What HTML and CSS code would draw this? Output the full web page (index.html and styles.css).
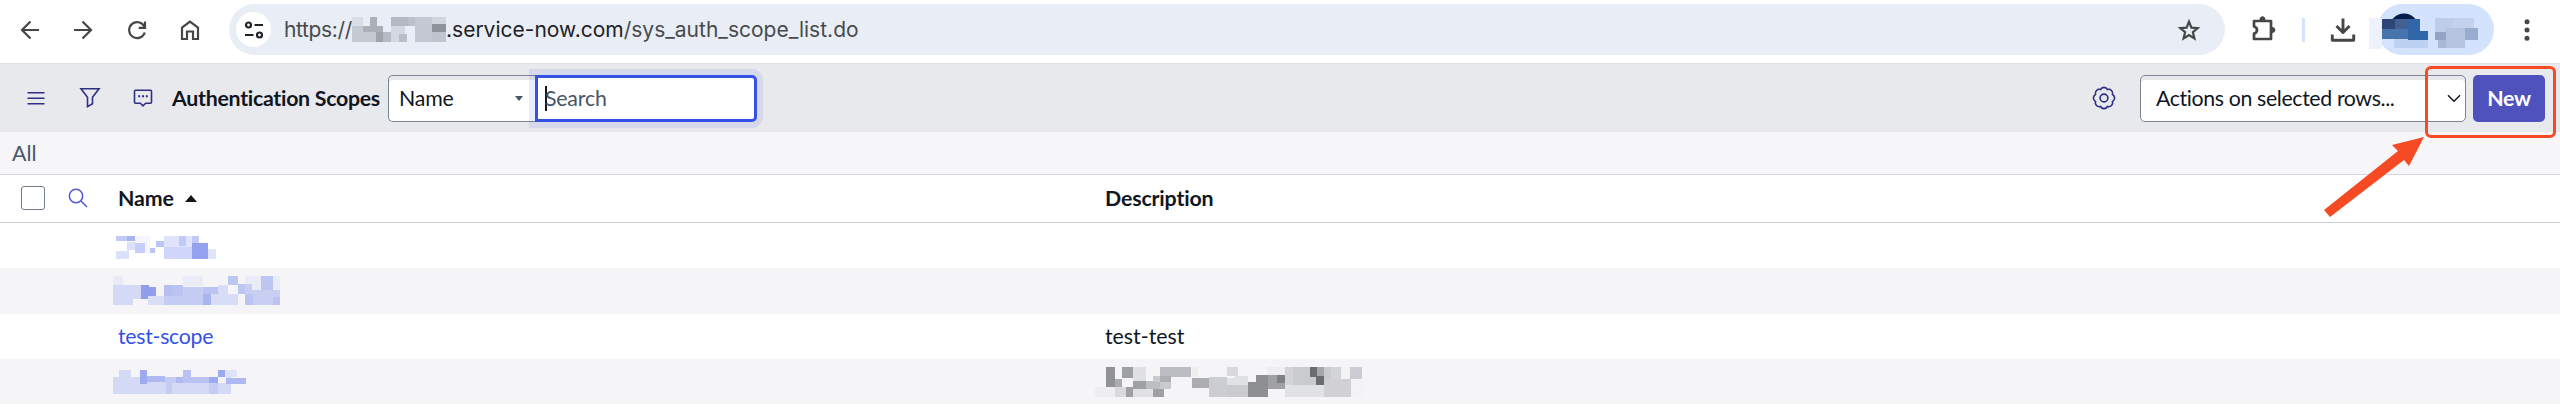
FILE: index.html
```html
<!doctype html>
<html lang="en">
    <head>
        <meta charset="utf-8">
        <title>Authentication Scopes</title>
        <meta name="viewport" content="width=device-width, initial-scale=1">
        <link rel="stylesheet" href="styles.css">
    </head>
    <body>
        <div class="browser-bar">
            <nav class="nav-icons">
                <svg class="icon" viewBox="0 0 28 28"><path d="M23 14H6M14.500 5.500L6 14l8.500 8.500"/></svg>
                <svg class="icon" viewBox="0 0 28 28"><path d="M5 14h17M13.500 5.500L22 14l-8.500 8.500"/></svg>
                <svg class="icon" viewBox="0 0 28 28"><path d="M21.300 10.500A8 8 0 1 0 21.800 16.500M22 5.500v6.300h-6.300"/></svg>
                <svg class="icon" viewBox="0 0 28 28"><path d="M6 23V11.500L14 5.500l8 6V23h-5v-7.500h-6V23z"/></svg>
            </nav>
            <div class="address">
                <span class="site-info">
                    <svg width="20" height="20" viewBox="0 0 20 20"><circle cx="4.500" cy="5" r="2.500"/><path d="M10.500 5H19M1 15h8.500"/><circle cx="15.500" cy="15" r="2.500"/></svg>
                </span>
                <span class="url-scheme">https://</span>
                <svg class="mask" width="94" height="25" viewBox="0 0 94 25" shape-rendering="crispEdges">
                    <path fill="#d9dde6" d="M0 0h11v9H0z"/><path fill="#c5c9d2" d="M0 9h24v16H0z"/><path fill="#abb0b8" d="M18 0h7v9h6v6H11V9h7z"/><path fill="#b5bac3" d="M24 15h15v10H24z"/><path fill="#a0a4ab" d="M24 15h7v10h-7z"/><path fill="#b4b8c2" d="M39 0h17v9H39z"/><path fill="#bcc0ca" d="M56 0h7v9h-7z"/><path fill="#d2d7e1" d="M39 9h14v16H39z"/><path fill="#b9bec9" d="M47 17h8v8h-8z"/><path fill="#c3c8d2" d="M63 0h18v25H63z"/><path fill="#d1d5de" d="M80 0h14v8H80z"/><path fill="#8e9299" d="M80 7h14v8H80z"/><path fill="#bfc4ce" d="M80 15h14v10H80z"/>
                </svg>
                <span class="url-host">.service-now.com</span><span class="url-path">/sys_auth_scope_list.do</span>
                <svg class="icon star" viewBox="0 0 28 28"><path d="M14 5.600l2.400 6 6.300.5-4.800 4.100 1.500 6.300-5.400-3.400-5.400 3.400 1.500-6.300-4.800-4.100 6.300-.5z"/></svg>
            </div>
            <div class="browser-tools">
                <svg class="icon puzzle" viewBox="0 0 28 28"><path d="M4 7h17v18H4v-5.500c4-1 4-6 0-7z" stroke-width="2.700" stroke-linejoin="round"/><path class="solid" d="M9.500 6c0-5 6-5 6 0zM22 13c4.500 0 4.500 6 0 6z"/></svg>
                <span class="separator"></span>
                <svg class="icon download" viewBox="0 0 28 28"><path d="M14 2.500v14M7.500 10L14 16.500 20.500 10M3.300 18.500v5.700h21.400v-5.700" stroke-width="2.900" stroke-linejoin="round"/></svg>
                <div class="profile">
                    <svg class="mask" width="117" height="31" viewBox="0 0 117 31" shape-rendering="crispEdges">
                        <path fill="#edf2fe" d="M0 0h13v31H0z"/><path fill="#bdd1f2" d="M25 21h34v9H25z"/><path fill="#2d4675" d="M13 1h13v10H13z"/><path fill="#445f93" d="M26 1h13v10H26z"/><path fill="#4675ad" d="M13 11h26v10H13z"/><path fill="#3065a8" d="M39 1h12v12h8v9H39z"/><path fill="#becde9" d="M66 0h18v14H66z"/><path fill="#c3d1ed" d="M84 0h21v10H84z"/><path fill="#b6c4e1" d="M77 10h19v20H77z"/><path fill="#93a5c7" d="M66 14h11v8H66z"/><path fill="#aab8d7" d="M69 22h8v8h-8z"/><path fill="#9aaccd" d="M96 10h13v12H96z"/>
                    </svg>
                </div>
                <svg class="kebab" width="6" height="22" viewBox="0 0 6 22"><circle cx="3" cy="2.800" r="2.500"/><circle cx="3" cy="11" r="2.500"/><circle cx="3" cy="19.200" r="2.500"/></svg>
            </div>
        </div>

        <header class="list-header">
            <div class="header-icons">
                <svg width="20" height="24" viewBox="0 0 20 24"><path d="M1.500 6.800h17M1.500 12.300h17M1.500 17.700h17"/></svg>
                <svg width="22" height="24" viewBox="0 0 22 24"><path d="M2 2.800h18l-6.500 8.500v6.500l-5 2.800v-9.300z"/></svg>
                <svg width="20" height="24" viewBox="0 0 20 24"><path d="M2.500 4.200h15q1 0 1 1v11q0 1-1 1h-4.800L10 19.800l-2.700-2.600H2.500q-1 0-1-1v-11q0-1 1-1z"/><path d="M5.200 10.300h2M9 10.300h2M12.800 10.300h2" stroke-width="2"/></svg>
            </div>
            <h1>Authentication Scopes</h1>
            <div class="select field">Name <i class="arrow"></i></div>
            <div class="search"><i class="cursor"></i>Search</div>
            <div class="header-actions">
                <svg class="gear" width="24" height="24" viewBox="0 0 24 24"><circle cx="12" cy="12" r="3.900"/><path d="M20.500 8.480a4 4 0 0 1 0 7.040a4 4 0 0 1-4.980 4.980a4 4 0 0 1-7.040 0a4 4 0 0 1-4.980-4.980a4 4 0 0 1 0-7.040a4 4 0 0 1 4.980-4.980a4 4 0 0 1 7.040 0a4 4 0 0 1 4.980 4.980z"/></svg>
                <div class="select actions">Actions on selected rows...
                    <svg width="14" height="9" viewBox="0 0 14 9"><path d="M1 1.200l6 6 6-6"/></svg>
                </div>
                <button class="new" type="button">New</button>
            </div>
        </header>

        <div class="breadcrumb">All</div>

        <section class="list">
            <div class="row head">
                <div class="tools">
                    <span class="checkbox"></span>
                    <svg width="20" height="20" viewBox="0 0 20 20"><circle cx="8" cy="8" r="6.700"/><path d="M13 13l6 6"/></svg>
                </div>
                <div class="name">Name <i class="sort"></i></div>
                <div class="description">Description</div>
            </div>
            <div class="row">
                <div class="tools"></div>
                <div class="name">
                    <svg class="mask" width="170" height="30" viewBox="0 0 170 30" shape-rendering="crispEdges">
                        <path fill="#c1c9f7" d="M3 5h11v5H3z"/><path fill="#a9b4f3" d="M14 5h8v5h-8z"/><path fill="#dbe0fb" d="M14 11h8v8h-6v9H3v-8h11z"/><path fill="#c7cff8" d="M22 12h10v10H22z"/><path fill="#f5f6fe" d="M22 5h15v7H22zM32 12h5v10h-5z"/><path fill="#bbc4f6" d="M37 17h5v5h-5zM43 10h8v6h-8z"/><path fill="#dfe3fc" d="M51 5h28v11H51z"/><path fill="#cfd6fa" d="M51 16h28v12H51z"/><path fill="#c1c9f7" d="M66 5h7v10h-7zM79 5h7v7h-7z"/><path fill="#94a1f1" d="M79 12h16v16H79z"/><path fill="#dfe4fc" d="M95 18h8v10h-8z"/>
                    </svg>
                </div>
                <div class="description"></div>
            </div>
            <div class="row">
                <div class="tools"></div>
                <div class="name">
                    <svg class="mask" width="170" height="30" viewBox="0 0 170 30" shape-rendering="crispEdges">
                        <path fill="#e9ebf7" d="M0 0h10v9H0zM70 0h20v10H70zM132 0h16v14h-16zM160 0h7v14h-7z"/><path fill="#d4daf6" d="M0 9h28v14h-8v6H0z"/><path fill="#929eec" d="M28 9h8v2h7v9h-8v3h-7z"/><path fill="#d9def6" d="M35 20h16v9H35z"/><path fill="#c6cdf4" d="M51 9h19v2h28v18H51z"/><path fill="#b5bff1" d="M51 9h8v11h-8z"/><path fill="#bac3f2" d="M59 9h11v11H59zM90 11h15v7H90z"/><path fill="#aab5f0" d="M90 18h8v11h-8z"/><path fill="#d7ddf6" d="M98 18h27v11H98zM105 9h10v9h-10z"/><path fill="#bdc5f3" d="M115 0h10v9h-10zM125 8h7v10h-7zM148 0h12v14h-12z"/><path fill="#c9cff3" d="M132 8h7v6h28v15h-35z"/><path fill="#bbc4f2" d="M132 18h8v11h-8zM160 21h7v8h-7z"/>
                    </svg>
                </div>
                <div class="description"></div>
            </div>
            <div class="row">
                <div class="tools"></div>
                <div class="name"><a href="#">test-scope</a></div>
                <div class="description">test-test</div>
            </div>
            <div class="row">
                <div class="tools"></div>
                <div class="name">
                    <svg class="mask" width="170" height="30" viewBox="0 0 170 30" shape-rendering="crispEdges">
                        <path fill="#d4daf6" d="M0 10h118v17H0zM6 3h12v7H6z"/><path fill="#9eaaf0" d="M27 3h7v14h-7z"/><path fill="#afb9f1" d="M34 9h18v6H34zM63 10h7v6h-7zM113 11h20v6h-20z"/><path fill="#c5ccf4" d="M52 10h11v6H52zM53 16h6v11h-6zM96 16h9v11h-9z"/><path fill="#b9c2f3" d="M70 3h8v7h18v6H70z"/><path fill="#9eaaf0" d="M96 10h9v6h-9zM105 3h7v7h-7z"/><path fill="#f3f4fa" d="M105 10h8v6h-8z"/><path fill="#dfe3f7" d="M112 3h12v7h-12z"/>
                    </svg>
                </div>
                <div class="description">
                    <svg class="mask wide" width="268" height="30" viewBox="0 0 268 30" shape-rendering="crispEdges">
                        <path fill="#eeeef0" d="M0 20h20v10H0zM97 0h6v10h-6zM172 0h18v8h-18z"/><path fill="#919296" d="M11 0h9v20h-9z"/><path fill="#abacb0" d="M20 12h7v8h-7zM97 11h9v10h-9z"/><path fill="#9fa0a4" d="M27 0h11v11H27zM38 14h13v8H38zM31 20h7v10h-7zM58 22h11v8H58z"/><path fill="#e0e1e4" d="M38 0h13v14H38zM38 22h20v8H38zM140 9h13v9h-13zM131 11h9v7h-9z"/><path fill="#d9dadd" d="M20 20h11v10H20z"/><path fill="#bcbdc2" d="M65 0h31v10H65zM51 14h14v8H51z"/><path fill="#c9cacd" d="M58 9h7v6h-7zM65 15h11v7H65z"/><path fill="#adaeb2" d="M65 9h11v6H65zM106 11h8v10h-8z"/><path fill="#cccdd2" d="M114 10h18v20h-18z"/><path fill="#cacbcf" d="M132 18h21v12h-21zM190 0h74v18h-74z"/><path fill="#d8d9dd" d="M132 0h11v9h-11z"/><path fill="#8e8f93" d="M153 15h8V8h12v22h-20z"/><path fill="#a0a1a5" d="M173 8h17v14h-17z"/><path fill="#7f8084" d="M182 8h8v8h-8z"/><path fill="#d3d4d7" d="M190 0h8v18h-8zM236 0h10v12h-10z"/><path fill="#e1e2e5" d="M190 18h39v12h-39z"/><path fill="#6b6c70" d="M215 0h7v10h-7zM221 9h8v9h-8z"/><path fill="#a6a7aa" d="M222 0h7v9h-7z"/><path fill="#d1d1d4" d="M229 12h27v18h-27z"/><path fill="#f3f3f5" d="M246 0h9v12h-9zM256 12h12v18h-12z"/><path fill="#cccdd2" d="M255 0h12v12h-12z"/>
                    </svg>
                </div>
            </div>
        </section>

        <!-- callout around the New button -->
        <div class="callout"></div>
        <svg class="callout-arrow" width="104" height="84" viewBox="0 0 104 84"><path d="M101 3L69 11l6 6L1 76l6 7 74-57 5 6z"/></svg>
    </body>
</html>
```

FILE: styles.css
```css
* {
    box-sizing: border-box;
}
body {
    margin: 0;
    position: relative;
    height: 412px;
    overflow: hidden;
    background: #fff;
    color: #10161e;
    font-family: Lato, sans-serif;
    font-size: 21.33px;
}
svg {
    display: block;
    flex: none;
    fill: none;
}

/* browser toolbar */
.browser-bar {
    display: flex;
    height: 64px;
    padding: 4px 30px 8px 16px;
    border-bottom: 1px solid #dfe1e3;
}
.nav-icons {
    display: flex;
    align-items: center;
    gap: 25.33px;
    width: 213px;
}
.icon {
    width: 28px;
    height: 28px;
    stroke: #444746;
    stroke-width: 2.2;
}
.solid {
    fill: #444746;
    stroke: none;
}
.address {
    display: flex;
    align-items: center;
    width: 1996px;
    height: 51px;
    padding: 0 22px 0 7px;
    border-radius: 26px;
    background: #e9eef6;
    color: #474a4d;
    font-family: Inter, sans-serif;
    font-size: 21px;
    white-space: nowrap;
}
.site-info {
    display: flex;
    align-items: center;
    justify-content: center;
    width: 35px;
    height: 35px;
    border-radius: 50%;
    background: #fff;
    stroke: #202124;
    stroke-width: 2.2;
}
.url-scheme {
    width: 68px;
    margin-left: 13px;
    letter-spacing: -0.35px;
}
.url-host {
    color: #1f2124;
}
.star {
    margin-left: auto;
}
.browser-tools {
    display: flex;
    flex: 1;
    align-items: center;
}
.puzzle {
    margin: 0 24px 4px 25px;
}
.separator {
    width: 3px;
    height: 24px;
    background: #d3e3fd;
}
.download {
    margin: 0 20px 0 24px;
}
.profile {
    width: 117px;
    height: 51px;
    padding-top: 14px;
    border-radius: 26px;
    background: radial-gradient(circle at 27px 24px, #041e49 14px, #d3e3fd 15px);
}
.profile .mask {
    margin-left: -8px;
}
.kebab {
    margin-left: 30px;
    fill: #444746;
}

/* list header */
.list-header {
    display: flex;
    align-items: center;
    height: 68px;
    padding: 0 15px 0 26px;
    background: #e8e9ed;
}
.header-icons {
    display: flex;
    width: 146px;
    gap: 32.5px;
    stroke: #2e2f85;
    stroke-width: 1.6;
}
h1 {
    width: 216px;
    margin: 0;
    font-size: 21.33px;
    font-weight: bold;
    letter-spacing: -0.28px;
    white-space: nowrap;
}
.select {
    display: flex;
    align-items: center;
    justify-content: space-between;
    height: 47px;
    border: 1.5px solid #7c8593;
    border-radius: 5px;
    background: #fff;
    box-shadow: inset 0 4px #e8e8eb;
    white-space: nowrap;
}
.field {
    width: 147px;
    padding: 0 12px 0 10px;
    border-right: 0;
    border-radius: 5px 0 0 5px;
    letter-spacing: -0.2px;
}
.arrow {
    border: 4.5px solid transparent;
    border-top: 5.5px solid #485566;
    border-bottom: 0;
}
.search {
    display: flex;
    align-items: center;
    width: 222px;
    height: 47px;
    padding-left: 7px;
    border: 3px solid #3452e5;
    border-radius: 0 5px 5px 0;
    background: #fff;
    box-shadow: 0 0 0 6px rgba(52, 82, 229, .1);
    color: #485566;
    letter-spacing: -0.2px;
}
.cursor {
    width: 2px;
    height: 25px;
    margin-right: -2px;
    background: #10161e;
}
.header-actions {
    display: flex;
    align-items: center;
    margin-left: auto;
}
.gear {
    margin-right: 24px;
    stroke: #2e2f85;
    stroke-width: 1.6;
}
.actions {
    width: 326px;
    margin-right: 7px;
    padding: 0 4px 0 15px;
    letter-spacing: -0.38px;
    stroke: #10161e;
    stroke-width: 1.5;
}
.new {
    width: 72px;
    height: 47px;
    padding: 0;
    border: 0;
    border-radius: 5px;
    background: #4f52bd;
    color: #fff;
    font: bold 21.33px Lato, sans-serif;
    letter-spacing: -0.3px;
}
.breadcrumb {
    height: 43px;
    padding-left: 12px;
    border-bottom: 1.5px solid #d5d7dd;
    background: #f6f6f8;
    color: #485566;
    line-height: 43px;
}

/* records */
.row {
    display: flex;
    align-items: center;
    height: 45.33px;
}
.row.head {
    height: 48px;
    padding-bottom: 1px;
    border-bottom: 1.5px solid #cbcfd6;
    font-weight: bold;
    letter-spacing: -0.15px;
}
.row:nth-child(odd) {
    background: #f5f5f8;
}
.row.head:first-child {
    background: #fff;
}
.tools {
    display: flex;
    align-items: center;
    gap: 23px;
    width: 118px;
    padding-left: 21px;
    stroke: #5356cf;
    stroke-width: 1.5;
}
.checkbox {
    width: 24px;
    height: 24px;
    border: 1.5px solid #737d8b;
    border-radius: 3px;
}
.name {
    display: flex;
    align-items: center;
    width: 987px;
}
.name .mask {
    margin-left: -5px;
}
.sort {
    margin-left: 11px;
    border: 6px solid transparent;
    border-top: 0;
    border-bottom: 7px solid #10161e;
}
.wide {
    margin-left: -10px;
}
a {
    color: #3452e5;
    letter-spacing: -0.3px;
    text-decoration: none;
}

.callout {
    position: absolute;
    top: 66px;
    left: 2425px;
    width: 131px;
    height: 72px;
    border: 3px solid #f64a24;
    border-radius: 6px;
}
.callout-arrow {
    position: absolute;
    top: 134px;
    left: 2323px;
    fill: #f64a24;
}
```
